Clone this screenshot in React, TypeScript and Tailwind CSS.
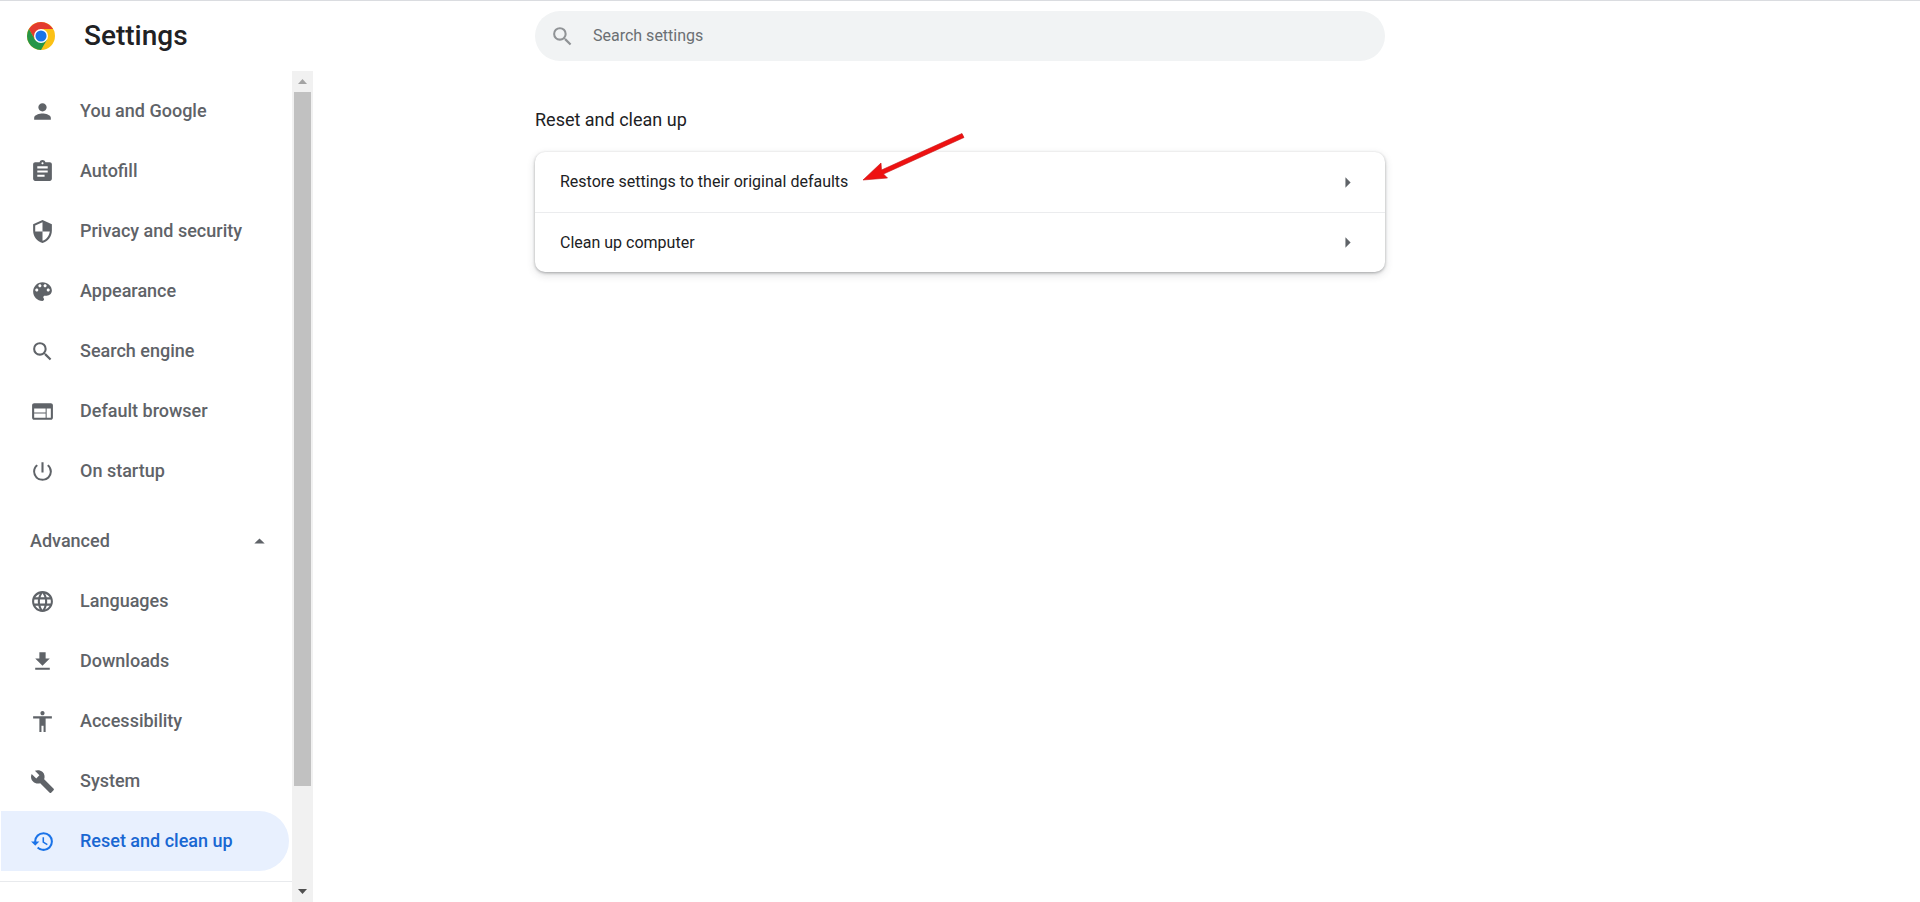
import type { ComponentType } from "react";
import {
  MdAccessibility,
  MdArrowDropUp,
  MdArrowRight,
  MdAssignment,
  MdBuild,
  MdFileDownload,
  MdLanguage,
  MdPerson,
  MdPowerSettingsNew,
  MdRestore,
  MdSearch,
  MdSecurity,
} from "react-icons/md";

type IconProps = { className?: string };
type Item = { label: string; icon: ComponentType<IconProps>; selected?: boolean };

function PaletteIcon({ className }: IconProps) {
  return (
    <svg viewBox="0 0 24 24" fill="currentColor" className={className} aria-hidden="true">
      <path d="M12 3c-4.97 0-9 4.03-9 9s4.03 9 9 9c.83 0 1.5-.67 1.5-1.5 0-.39-.15-.74-.39-1.01-.23-.26-.38-.61-.38-.99 0-.83.67-1.5 1.5-1.5H16c2.76 0 5-2.24 5-5 0-4.42-4.03-8-9-8zm-5.500 9c-.83 0-1.500-.67-1.500-1.500S5.670 9 6.500 9 8 9.670 8 10.500 7.330 12 6.500 12zm3-4C8.670 8 8 7.330 8 6.500S8.670 5 9.500 5s1.500.67 1.500 1.500S10.330 8 9.500 8zm5 0c-.83 0-1.500-.67-1.500-1.500S13.670 5 14.500 5s1.500.67 1.500 1.500S15.330 8 14.500 8zm3 4c-.83 0-1.500-.67-1.500-1.500S16.670 9 17.500 9s1.500.67 1.500 1.500-.67 1.500-1.500 1.500z" />
    </svg>
  );
}

function BrowserIcon({ className }: IconProps) {
  return (
    <svg viewBox="0 0 24 24" fill="currentColor" className={className} aria-hidden="true">
      <path d="M20 4H4c-1.100 0-1.990.9-1.990 2L2 18c0 1.100.9 2 2 2h16c1.100 0 2-.9 2-2V6c0-1.100-.9-2-2-2zm-5 14H4v-4h11v4zm0-5H4V9h11v4zm5 5h-4V9h4v9z" />
    </svg>
  );
}

const basicItems: Item[] = [
  { label: "You and Google", icon: MdPerson },
  { label: "Autofill", icon: MdAssignment },
  { label: "Privacy and security", icon: MdSecurity },
  { label: "Appearance", icon: PaletteIcon },
  { label: "Search engine", icon: MdSearch },
  { label: "Default browser", icon: BrowserIcon },
  { label: "On startup", icon: MdPowerSettingsNew },
];

const advancedItems: Item[] = [
  { label: "Languages", icon: MdLanguage },
  { label: "Downloads", icon: MdFileDownload },
  { label: "Accessibility", icon: MdAccessibility },
  { label: "System", icon: MdBuild },
  { label: "Reset and clean up", icon: MdRestore, selected: true },
];

function ChromeLogo() {
  return (
    <svg viewBox="0 0 48 48" className="size-7" aria-hidden="true">
      <circle cx="24" cy="24" r="24" fill="#fbc116" />
      <path d="M3.22 12A24 24 0 0 1 44.78 12H24L13.6 30Z" fill="#e33b2e" />
      <path d="M3.22 12A24 24 0 0 0 24 48L34.4 30L24 24L13.6 30Z" fill="#269547" />
      <circle cx="24" cy="24" r="12" fill="#fff" />
      <circle cx="24" cy="24" r="9.5" fill="#1a73e8" />
    </svg>
  );
}

function NavList({ items }: { items: Item[] }) {
  return (
    <ul>
      {items.map(({ label, icon: Icon, selected }) => (
        <li key={label}>
          <a
            href="#"
            aria-current={selected ? "page" : undefined}
            className={
              selected
                ? "mr-[3px] ml-px flex h-[60px] items-center gap-[25px] rounded-r-full bg-[#e8f0fe] pl-[29px] text-[#1967d2]"
                : "mr-[3px] ml-px flex h-[60px] items-center gap-[25px] rounded-r-full pl-[29px] text-[#5f6368]"
            }
          >
            <Icon className={selected ? "size-[25px] text-[#1a73e8]" : "size-[25px]"} />
            <span>{label}</span>
          </a>
        </li>
      ))}
    </ul>
  );
}

function Scrollbar() {
  return (
    <div className="flex w-[21px] shrink-0 flex-col items-center bg-[#f1f1f1]" aria-hidden="true">
      <div className="flex h-[21px] items-center justify-center">
        <svg viewBox="0 0 9 5" className="h-[5px] w-[9px] fill-[#a3a3a3]">
          <path d="M0 5L4.5 0L9 5Z" />
        </svg>
      </div>
      <div className="w-[17px] flex-1">
        <div className="h-[88%] bg-[#c1c1c1]" />
      </div>
      <div className="flex h-[21px] items-center justify-center">
        <svg viewBox="0 0 9 5" className="h-[5px] w-[9px] fill-[#505050]">
          <path d="M0 0L4.5 5L9 0Z" />
        </svg>
      </div>
    </div>
  );
}

function PointerArrow() {
  return (
    <svg
      viewBox="0 0 104 50"
      className="pointer-events-none absolute bottom-3 left-full ml-3.5 h-[50px] w-[104px]"
      aria-hidden="true"
    >
      <path
        d="M1 48L19 31L19.500 38L100 1.500L102 5.500L21.500 42L25.500 46Z"
        fill="#ee1111"
        stroke="#c41212"
        strokeWidth="0.6"
      />
    </svg>
  );
}

export default function App() {
  return (
    <div className="flex h-screen flex-col overflow-hidden border-t border-[#dadce0] bg-white font-[Roboto,sans-serif] text-[#202124]">
      <header className="grid h-[70px] shrink-0 grid-cols-[313px_minmax(0,1fr)_313px] items-center">
        <div className="flex items-center gap-[29px] pl-[27px]">
          <ChromeLogo />
          <h1 className="text-[28px] leading-9 font-medium">Settings</h1>
        </div>
        <label className="mx-auto flex h-[50px] w-full max-w-[850px] items-center gap-[18px] rounded-full bg-[#f1f3f4] pl-[15px]">
          <MdSearch className="size-[25px] text-[#909396]" />
          <input
            type="search"
            aria-label="Search settings"
            placeholder="Search settings"
            className="min-w-0 flex-1 bg-transparent text-[16px] leading-6 outline-none placeholder:text-[#6b6f73]"
          />
        </label>
      </header>

      <div className="grid min-h-0 flex-1 grid-cols-[313px_minmax(0,1fr)_313px]">
        <aside className="flex min-h-0">
          <nav className="min-h-0 flex-1 overflow-hidden pt-2.5 text-[18px] leading-6 font-medium">
            <NavList items={basicItems} />
            <button
              type="button"
              aria-expanded="true"
              className="mt-2.5 flex h-[60px] w-full items-center justify-between pr-5 pl-[30px] text-[#5f6368]"
            >
              Advanced
              <MdArrowDropUp className="size-[25px]" />
            </button>
            <NavList items={advancedItems} />
            <hr className="mt-2.5 border-[#e8eaed]" />
          </nav>
          <Scrollbar />
        </aside>

        <main className="mx-auto w-full max-w-[850px] pt-[37px]">
          <h2 className="text-[18px] leading-6">Reset and clean up</h2>
          <div className="mt-5 rounded-[10px] bg-white text-[16px] leading-6 shadow-[0_1px_3px_rgba(60,64,67,0.4),0_3px_8px_rgba(60,64,67,0.16)]">
            <button type="button" className="flex h-[60px] w-full items-center justify-between px-[25px] text-left">
              <span className="relative">
                Restore settings to their original defaults
                <PointerArrow />
              </span>
              <MdArrowRight className="size-[25px] text-[#5f6368]" />
            </button>
            <button
              type="button"
              className="flex h-[60px] w-full items-center justify-between border-t border-[#ebecee] px-[25px] text-left"
            >
              Clean up computer
              <MdArrowRight className="size-[25px] text-[#5f6368]" />
            </button>
          </div>
        </main>
      </div>
    </div>
  );
}
